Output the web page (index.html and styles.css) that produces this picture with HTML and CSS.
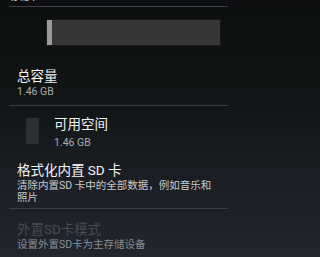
FILE: index.html
```html
<!DOCTYPE html>
<html lang="zh">
<head>
<meta charset="utf-8">
<link rel="stylesheet" href="styles.css">
</head>
<body>
<div class="screen">
  <div class="cut"><span class="cut-text">存储卡</span></div>
  <div class="divider"></div>
  <div class="item item-total">
    <div class="bar"><div class="bar-fill"></div></div>
    <div class="title">总容量</div>
    <div class="summary">1.46 GB</div>
  </div>
  <div class="divider"></div>
  <div class="item item-free">
    <div class="swatch"></div>
    <div class="texts">
      <div class="title">可用空间</div>
      <div class="summary">1.46 GB</div>
    </div>
  </div>
  <div class="item item-format">
    <div class="title">格式化内置 SD 卡</div>
    <div class="summary desc">清除内置SD 卡中的全部数据，例如音乐和照片</div>
  </div>
  <div class="divider"></div>
  <div class="item item-ext disabled">
    <div class="title">外置SD卡模式</div>
    <div class="summary">设置外置SD卡为主存储设备</div>
  </div>
</div>
</body>
</html>
```
FILE: styles.css
```css
html, body {
  margin: 0;
  padding: 0;
}
body {
  width: 234px;
  height: 257px;
  overflow: hidden;
  background: linear-gradient(180deg, #0c0e0f 0%, #111415 35%, #1b1e24 70%, #22262d 100%);
  font-family: Roboto, "Noto Sans CJK SC", sans-serif;
  color: #f2f2f2;
}
.screen {
  display: flex;
  flex-direction: column;
}
.cut {
  height: 6px;
  overflow: hidden;
  padding-left: 10px;
}
.cut-text {
  display: block;
  margin-top: -9px;
  font-size: 9.5px;
  line-height: 12px;
  color: #e8e8e8;
}
.divider {
  height: 1px;
  margin: 0 6px 0 9px;
  background: #3c3f43;
}
.item {
  padding-left: 17px;
  padding-right: 8px;
  box-sizing: border-box;
}
.title {
  font-size: 13.5px;
  line-height: 16px;
  color: #f4f4f4;
}
.summary {
  font-size: 10.5px;
  line-height: 13px;
  color: #a9abae;
}
.item-total {
  padding-top: 13px;
  height: 98px;
}
.bar {
  margin-left: 30px;
  width: 173px;
  height: 25px;
  background: #363636;
  box-shadow: 0 0 0 1px #1a1a1a;
  display: flex;
}
.bar-fill {
  width: 5px;
  background: #9a9a9a;
}
.item-total .title {
  margin-top: 23px;
}
.item-total .summary {
  margin-top: 1px;
}
.item-free {
  display: flex;
  align-items: flex-start;
  padding-left: 26px;
  padding-top: 10px;
  height: 52px;
}
.swatch {
  width: 13px;
  height: 26px;
  margin-top: 2px;
  background: #2e2f31;
  border-radius: 1px;
}
.texts {
  margin-left: 15px;
}
.item-free .summary {
  margin-top: 4px;
}
.item-format {
  padding-top: 4px;
  height: 50px;
}
.desc {
  width: 200px;
  margin-top: 2px;
  line-height: 12px;
  color: #c8cacc;
}
.item-ext {
  padding-top: 12px;
}
.item-ext .summary {
  margin-top: 1px;
}
.disabled .title {
  color: #464a50;
}
.disabled .summary {
  color: #8a8d91;
}
```
